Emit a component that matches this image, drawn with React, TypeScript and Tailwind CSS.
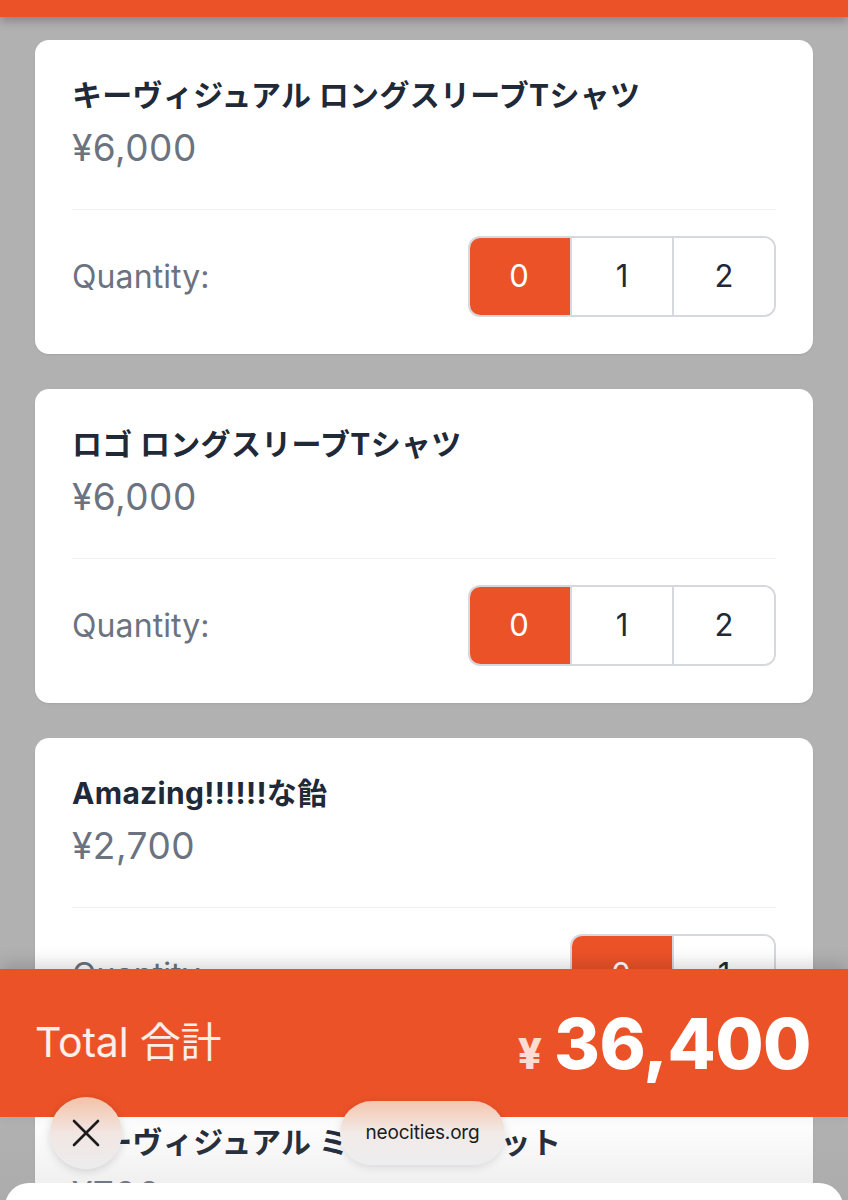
import React from "react";

const FONT = { fontFamily: '"Inter", "Noto Sans CJK JP", "Noto Sans", sans-serif' };

type Item = { title: string; price: string; options: number[] };

const items: Item[] = [
  { title: "キーヴィジュアル ロングスリーブTシャツ", price: "¥6,000", options: [0, 1, 2] },
  { title: "ロゴ ロングスリーブTシャツ", price: "¥6,000", options: [0, 1, 2] },
  { title: "Amazing!!!!!!な飴", price: "¥2,700", options: [0, 1] },
  { title: "キーヴィジュアル ミニバッジセット", price: "¥700", options: [0, 1, 2] },
];

function Card({ item }: { item: Item }) {
  return (
    <div className="bg-white rounded-[14px] px-[37px] pt-[36px] pb-[37px] shadow-[0_1px_2px_rgba(0,0,0,0.08)]">
      <div className="text-[30px] leading-[38px] font-bold text-[#1f2937] tracking-[0.3px] whitespace-nowrap">{item.title}</div>
      <div className="text-[37px] leading-[44px] mt-[12px] text-[#6b7280] tracking-[0.5px]">{item.price}</div>
      <div className="mt-[39px] border-t border-[#eef0f3]" />
      <div className="mt-[26px] flex items-center justify-between">
        <div className="text-[32px] text-[#6b7280] tracking-[0.1px]">Quantity:</div>
        <div className="flex h-[81px] rounded-[12px] overflow-hidden border-2 border-[#d5d8de]">
          {item.options.map((n, i) => (
            <div
              key={n}
              className={
                i === 0
                  ? "w-[102px] flex items-center justify-center bg-[#ec5228] text-white text-[31px] -m-[2px] mr-0"
                  : "w-[102px] flex items-center justify-center bg-white text-[#1f2937] text-[31px] border-l-2 border-[#d5d8de]"
              }
            >
              {n}
            </div>
          ))}
        </div>
      </div>
    </div>
  );
}

export default function App() {
  return (
    <div className="relative w-[848px] h-[1200px] overflow-hidden bg-[#b1b1b1]" style={FONT}>
      <div className="relative z-10 h-[17px] bg-[#ec5228] shadow-[0_4px_10px_rgba(0,0,0,0.25)]" />
      <div className="flex flex-col gap-[35px] px-[35px] pt-[23px]">
        {items.map((it) => (
          <Card key={it.title} item={it} />
        ))}
      </div>

      {/* bottom blur gradient */}
      <div className="absolute left-0 right-0 top-[1117px] h-[83px] bg-gradient-to-b from-[rgba(255,255,255,0)] to-[rgba(150,150,155,0.18)]" />

      {/* total bar */}
      <div className="absolute left-0 right-0 top-[969px] h-[148px] bg-[#ec5228] flex items-center justify-between px-[35px] shadow-[0_-6px_16px_rgba(0,0,0,0.15)]">
        <div className="text-[41px] text-white/90 tracking-[-0.2px]">Total 合計</div>
        <div className="flex items-baseline gap-[12px] mr-[2px]">
          <span className="text-[42px] font-extrabold text-white/80">¥</span>
          <span className="text-[70px] font-extrabold text-white tracking-[-0.5px]">36,400</span>
        </div>
      </div>

      {/* close button */}
      <div className="absolute left-[50px] top-[1097px] w-[72px] h-[72px] rounded-full bg-gradient-to-b from-[#f3c2a8] via-[#f1e6e2] to-[#ececee] shadow-[0_2px_10px_rgba(0,0,0,0.15)] flex items-center justify-center">
        <svg width="30" height="30" viewBox="0 0 30 30" fill="none" stroke="#1c1c1e" strokeWidth="2.6" strokeLinecap="round">
          <path d="M3 3L27 27M27 3L3 27" />
        </svg>
      </div>

      {/* url pill */}
      <div className="absolute left-[340px] top-[1101px] w-[165px] h-[64px] rounded-full bg-gradient-to-b from-[#f4c5ae] via-[#f1ebe8] to-[#ededef] shadow-[0_2px_10px_rgba(0,0,0,0.12)] flex items-center justify-center">
        <span className="text-[19px] text-[#1c1c1e] tracking-[-0.2px]">neocities.org</span>
      </div>

      {/* bottom sheet */}
      <div className="absolute left-[5px] right-[5px] top-[1183px] h-[40px] bg-white rounded-t-[24px]" />
    </div>
  );
}
